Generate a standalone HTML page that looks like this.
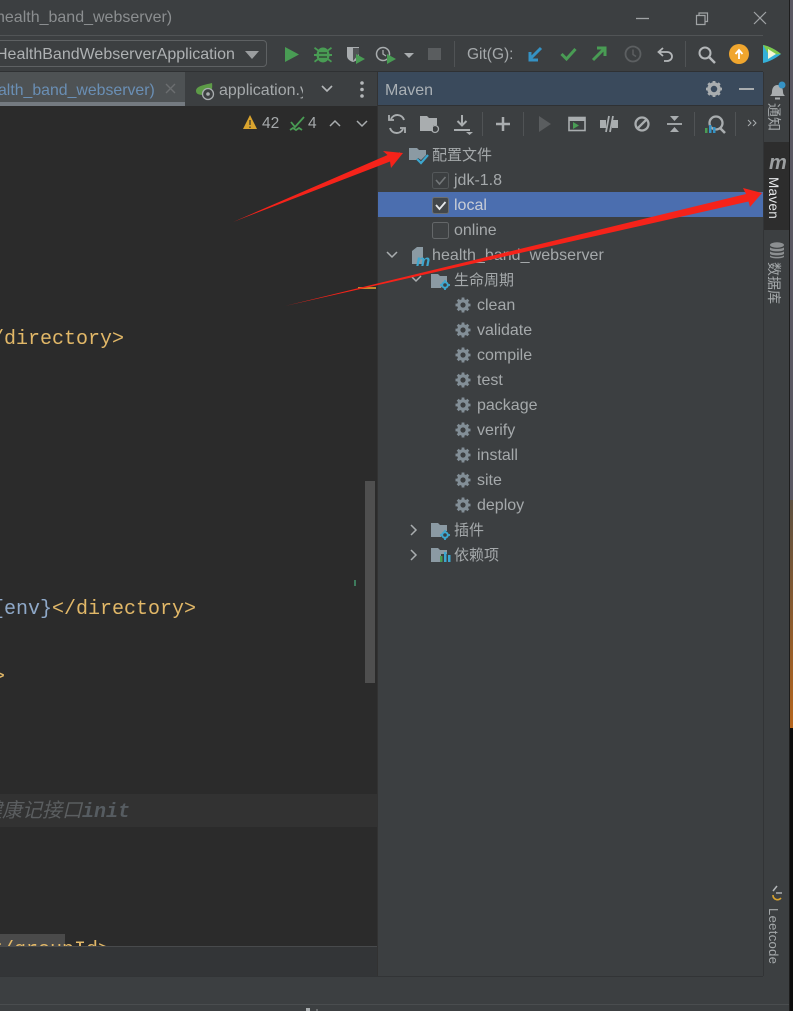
<!DOCTYPE html>
<html><head><meta charset="utf-8">
<style>
html,body{margin:0;padding:0;background:#3c3f41}
#p{position:relative;width:793px;height:1011px;overflow:hidden;background:#3c3f41;font-family:"Liberation Sans","Noto Sans CJK SC",sans-serif;color:#adb0b2}
.b{position:absolute}
.t{position:absolute;white-space:nowrap;font-size:16px;line-height:20px;color:#a5a9ab}
.z{font-size:15px}
.c{position:absolute;white-space:pre;font-family:"Liberation Mono",monospace;font-size:20px;line-height:24px;color:#e2b868}
svg{position:absolute;overflow:visible}
.v{position:absolute;white-space:nowrap;font-size:13px;line-height:16px;transform-origin:0 0;transform:rotate(90deg);color:#a5a9ab}
</style></head><body><div id="p">

<!-- structure -->
<div class="b" style="left:0;top:35px;width:763px;height:1px;background:#515456"></div>
<div class="b" style="left:0;top:71px;width:763px;height:1px;background:#2f3133"></div>
<div class="b" style="left:0;top:72px;width:378px;height:34px;background:#3c3f41"></div>
<div class="b" style="left:0;top:72px;width:185px;height:34px;background:#4e5254"></div>
<div class="b" style="left:0;top:102px;width:185px;height:4px;background:#747a80"></div>
<div class="b" style="left:378px;top:72px;width:385px;height:33px;background:#3a4a5c"></div>
<div class="b" style="left:378px;top:105px;width:385px;height:1px;background:#2f3133"></div>
<div class="b" style="left:0;top:106px;width:377px;height:840px;background:#2b2b2b"></div>
<div class="b" style="left:377px;top:72px;width:1px;height:904px;background:#323232"></div>
<div class="b" style="left:0;top:794px;width:377px;height:33px;background:#323232"></div>
<div class="b" style="left:0;top:946px;width:377px;height:1px;background:#484a4c"></div>
<div class="b" style="left:0;top:947px;width:377px;height:29px;background:#333537"></div>
<div class="b" style="left:0;top:976px;width:763px;height:1px;background:#323436"></div>
<div class="b" style="left:0;top:1004px;width:790px;height:1px;background:#4a4d4f"></div>
<div class="b" style="left:763px;top:72px;width:1px;height:904px;background:#323436"></div>
<div class="b" style="left:764px;top:142px;width:26px;height:88px;background:#2d2d2d"></div>
<div class="b" style="left:365px;top:481px;width:10px;height:202px;background:#4f4f4f"></div>
<div class="b" style="left:354px;top:580px;width:2px;height:6px;background:#3d7a5c"></div>
<div class="b" style="left:358px;top:287px;width:18px;height:2px;background:#c08a2c"></div>

<!-- right edge -->
<div class="b" style="left:789px;top:0;width:1px;height:1011px;background:#1d1d1d"></div>
<div class="b" style="left:790px;top:0;width:3px;height:500px;background:#5a5862"></div>
<div class="b" style="left:790px;top:500px;width:3px;height:228px;background:linear-gradient(#5d5040,#b5651d)"></div>
<div class="b" style="left:790px;top:728px;width:3px;height:283px;background:#0c0c0c"></div>

<!-- title -->
<div class="t" style="left:-4px;top:8px;color:#8b8e90;font-size:16px">health_band_webserver)</div>
<svg style="left:0;top:0" width="793" height="72" fill="none">
<path d="M636 18.5h13" stroke="#a0a3a5" stroke-width="1.3"/>
<path d="M696.500 15.500h8.500v9h-8.500zM699 15.500v-2.500h8.500v8.500h-2.500" stroke="#a0a3a5" stroke-width="1.200"/>
<path d="M754 12l12 12M766 12l-12 12" stroke="#a0a3a5" stroke-width="1.200"/>
</svg>

<!-- run config -->
<div class="b" style="left:-6px;top:40px;width:273px;height:27px;border:1px solid #5e6163;border-radius:4px;box-sizing:border-box"></div>
<div class="t" style="left:-4px;top:45px;font-size:16px;color:#aeb1b3">HealthBandWebserverApplication</div>

<svg style="left:0;top:0" width="793" height="72">
<path d="M245 51h14l-7 8z" fill="#9a9d9f"/>
<path d="M285 47l14 7.500-14 7.500z" fill="#499c54"/>
<!-- bug -->
<g fill="#499c54"><ellipse cx="323" cy="55" rx="6.500" ry="7.500"/><path d="M315 47l4 3-1 1.500-4-3zM331 47l-4 3 1 1.500 4-3zM314 54h5v2h-5zM327 54h5v2h-5zM314 61l4-3 1 1.500-4 3zM332 61l-4-3-1 1.500 4 3z"/></g>
<path d="M319 53h8M319 57h8" stroke="#2f3a30" stroke-width="1.200"/>
<!-- coverage -->
<path d="M347 47h12v9c0 3-3 5-6 6-3-1-6-3-6-6z" fill="#a9adaf"/><path d="M353 48h6v6l-6 7z" fill="#505355"/>
<path d="M356 54l9 5-9 5z" fill="#499c54"/>
<!-- profiler -->
<circle cx="383" cy="54" r="6.500" fill="none" stroke="#a9adaf" stroke-width="1.500"/><path d="M383 50v4l3 2" fill="none" stroke="#a9adaf" stroke-width="1.300"/>
<path d="M387 54l9 5-9 5z" fill="#499c54"/>
<path d="M404 53h10l-5 5z" fill="#a9adaf"/>
<rect x="428" y="48" width="13" height="12" fill="#5a5d5f"/>
<rect x="454" y="41" width="1" height="26" fill="#505355"/>
<!-- git -->
<path d="M541 48l-11 11M530 52v8h8" fill="none" stroke="#3592c4" stroke-width="3"/>
<path d="M561.500 54l5 5 9-10" fill="none" stroke="#499c54" stroke-width="3"/>
<path d="M593 60l11-11M597 48h8v8" fill="none" stroke="#499c54" stroke-width="3"/>
<circle cx="633" cy="54" r="7.500" fill="none" stroke="#5c5f61" stroke-width="1.800"/><path d="M633 49.500v5l3 2" fill="none" stroke="#5c5f61" stroke-width="1.500"/>
<path d="M663 48l-4.500 4 4.500 4M659 52h8c3 0 5 2 5 4.500s-2 4.500-5 4.500h-3" fill="none" stroke="#b4b7b9" stroke-width="1.800"/>
<rect x="685" y="41" width="1" height="26" fill="#505355"/>
<circle cx="705" cy="53" r="5.500" fill="none" stroke="#b4b7b9" stroke-width="2"/><path d="M709 57l6 6" stroke="#b4b7b9" stroke-width="2.500"/>
<circle cx="739" cy="54" r="10" fill="#f0a62e"/><path d="M739 59v-8M735.500 54l3.500-4 3.500 4" fill="none" stroke="#fff" stroke-width="1.800"/>
<path d="M763 45c6 1 13 5 18 9-5 4-12 8-18 9z" fill="#35b0d8"/><path d="M763 45c6 1 13 5 18 9l-12 1z" fill="#7ec84a"/><path d="M768 49l8 5-8 5z" fill="#f5f7d8"/>
</svg>
<div class="t" style="left:467px;top:45px;font-size:15.500px;color:#a5a9ab">Git(G):</div>

<!-- tabs -->
<div class="t" style="left:-2px;top:81px;color:#6a8fb5;font-size:15.850px">alth_band_webserver)</div>
<svg style="left:0;top:0" width="400" height="140" fill="none">
<path d="M166 84l9 9M175 84l-9 9" stroke="#6b6e70" stroke-width="1.400"/>
<path d="M196 91c0-5 8-6 16-8 1 6-1 12-8 12-5 0-8-1-8-4z" fill="#5d9b47"/>
<circle cx="208" cy="94" r="5.500" fill="#3c3f41" stroke="#a9adaf" stroke-width="1.300"/><circle cx="208" cy="94" r="1.800" fill="#a9adaf"/>
<path d="M322 86l5 5 5-5" stroke="#b4b7b9" stroke-width="1.600"/>
<circle cx="362" cy="83" r="1.800" fill="#b4b7b9"/><circle cx="362" cy="89.500" r="1.800" fill="#b4b7b9"/><circle cx="362" cy="96" r="1.800" fill="#b4b7b9"/>
<path d="M250 115l7 14h-14z" fill="#d9a32e"/><path d="M250 120v5M250 126.500v1.500" stroke="#3c3a30" stroke-width="1.300"/>
<path d="M291 122l4 5 9-10M290 130l3-2 3 2 3-2 3 2" stroke="#499c54" stroke-width="1.800"/>
<path d="M330 126l5-5 5 5M357 121l5 5 5-5" stroke="#a9adaf" stroke-width="1.500"/>
</svg>
<div class="t" style="left:219px;top:81px;color:#a5a9ab;font-size:16px;width:84px;overflow:hidden">application.yml</div>
<div class="t" style="left:262px;top:114px;font-size:15.500px;color:#a5a9ab">42</div>
<div class="t" style="left:308px;top:114px;font-size:15.500px;color:#a5a9ab">4</div>

<!-- code -->
<div class="c" style="left:-8px;top:328px">/directory&gt;</div>
<div class="c" style="left:-8px;top:598px"><span style="color:#8fa9c9">{env}</span>&lt;/directory&gt;</div>
<div class="c" style="left:-7px;top:666px">&gt;</div>
<div class="c" style="left:-18px;top:801px;font-style:italic;color:#5b5e60;font-family:'Liberation Mono','Noto Sans CJK SC',monospace">健康记接口<span style="font-weight:bold;color:#565c61">init</span></div>
<div class="b" style="left:0;top:934px;width:65px;height:12px;background:#4a4a4a"></div>
<div class="b" style="left:0;top:934px;width:377px;height:12px;overflow:hidden"><div class="c" style="left:-10px;top:5px">&lt;/groupId&gt;</div></div>

<!-- Maven panel -->
<div class="t" style="left:385px;top:81px;font-size:16px;color:#aab0b5">Maven</div>
<svg style="left:0;top:0" width="793" height="140" fill="none">
<g transform="translate(714 89)"><circle r="5" stroke="#a9adaf" stroke-width="3.500"/><path d="M0-8v3M0 5v3M-8 0h3M5 0h3M-5.700-5.700l2 2M3.700 3.700l2 2M-5.700 5.700l2-2M3.700-3.700l2-2" stroke="#a9adaf" stroke-width="2.800"/></g>
<path d="M739 89h15" stroke="#a9adaf" stroke-width="2"/>
<!-- toolbar -->
<path d="M404 120a7 7 0 0 0-13-1M390 128a7 7 0 0 0 13 1" stroke="#a9adaf" stroke-width="2"/>
<path d="M389 115v5h5M405 133v-5h-5" stroke="#a9adaf" stroke-width="1.800"/>
<path d="M420 116h7l2 2h8v7h-4v6h-13z" fill="#a9adaf"/>
<circle cx="435" cy="129" r="3.500" stroke="#a9adaf" stroke-width="1.300"/>
<path d="M462 115v10M457.500 121l4.500 4.500 4.500-4.500M454 130h16" stroke="#a9adaf" stroke-width="2"/><path d="M466 132h7l-3.500 3z" fill="#a9adaf"/>
<rect x="482" y="112" width="1" height="24" fill="#505355"/>
<path d="M503 117v14M496 124h14" stroke="#a9adaf" stroke-width="2.500"/>
<rect x="523" y="112" width="1" height="24" fill="#505355"/>
<path d="M539 116l12 8-12 8z" fill="#5a5d5f"/>
<rect x="569" y="117.500" width="16" height="13" stroke="#a9adaf" stroke-width="1.600"/>
<path d="M569 118h16v3h-16z" fill="#a9adaf"/>
<path d="M573 122l6 3.500-6 3.500z" fill="#499c54"/>
<path d="M600 120h6v8h-6zM612 120h6v8h-6z" fill="#a9adaf"/><path d="M606 132l3-16M610 132l3-16" stroke="#a9adaf" stroke-width="1.800"/>
<circle cx="642" cy="124" r="6.500" stroke="#a9adaf" stroke-width="2.300"/><path d="M637.500 128.500l9-9" stroke="#a9adaf" stroke-width="2.300"/>
<path d="M667 124h15" stroke="#a9adaf" stroke-width="1.800"/>
<path d="M670 116h9l-4.500 5zM670 132h9l-4.500-5z" fill="#a9adaf"/>
<rect x="694" y="112" width="1" height="24" fill="#505355"/>
<circle cx="716" cy="123" r="6.500" stroke="#a9adaf" stroke-width="2.300"/><path d="M720 128l5 5" stroke="#a9adaf" stroke-width="2.600"/>
<rect x="705" y="128" width="2.500" height="5" fill="#499c54"/><rect x="709" y="125" width="2.500" height="8" fill="#3592c4"/><rect x="713" y="127" width="2.500" height="6" fill="#3592c4"/>
<rect x="735" y="112" width="1" height="24" fill="#505355"/>
<path d="M748 120l3 3-3 3M753 120l3 3-3 3" stroke="#a9adaf" stroke-width="1"/>
</svg>

<!-- selected row -->
<div class="b" style="left:378px;top:192px;width:385px;height:25px;background:#4b6eaf"></div>

<!-- tree -->
<svg style="left:0;top:0" width="793" height="600" fill="none">
<path d="M392 153l4 3.500 4-3.500" stroke="#a9adaf" stroke-width="1.500"/>
<path d="M409 148h8l2 2h7v5l-5 5-3-2-2 2h-7z" fill="#8b9aa3"/>
<path d="M417 159l4 4 7-8" stroke="#3da7cf" stroke-width="2.200"/>
<rect x="432.500" y="172.500" width="16" height="16" rx="2" stroke="#54585a" fill="#3c3f41"/>
<path d="M436 180l3.500 4 6-7" stroke="#74787a" stroke-width="1.600"/>
<rect x="432.500" y="197.500" width="16" height="16" rx="2" stroke="#6b6e70" fill="#43474a"/>
<path d="M436 205l3.500 4 6-7" stroke="#e6e8ea" stroke-width="1.800"/>
<rect x="432.500" y="222.500" width="16" height="16" rx="2" stroke="#646769" fill="#3f4244"/>
<path d="M387 252l5 5 5-5" stroke="#a9adaf" stroke-width="1.500"/>
<path d="M412 251l5-4h6v17h-11z" fill="#8b9aa3"/>
<text x="416" y="266" font-family="Liberation Sans" font-size="16" font-weight="bold" font-style="italic" fill="#3da7cf">m</text>
<path d="M411 276l5 5 5-5" stroke="#a9adaf" stroke-width="1.500"/>
<path d="M431 274h7l2 2h7v6h-3l-3 6h-10z" fill="#8b9aa3"/>
<g transform="translate(445 285)"><circle r="2.800" stroke="#3da7cf" stroke-width="2"/><path d="M0-5v2M0 3v2M-5 0h2M3 0h2" stroke="#3da7cf" stroke-width="1.800"/></g>
<path d="M411 525l5 5-5 5M411 550l5 5-5 5" stroke="#a9adaf" stroke-width="1.500"/>
<path d="M431 523h7l2 2h7v6h-3l-3 6h-10z" fill="#8b9aa3"/>
<g transform="translate(445 535)"><circle r="2.800" stroke="#3da7cf" stroke-width="2"/><path d="M0-5v2M0 3v2M-5 0h2M3 0h2" stroke="#3da7cf" stroke-width="1.800"/></g>
<path d="M431 548h7l2 2h7v4h-6v8h-10z" fill="#8b9aa3"/>
<rect x="440" y="556" width="2.500" height="6" fill="#499c54"/><rect x="444" y="552" width="2.500" height="10" fill="#3da7cf"/><rect x="448" y="555" width="2.500" height="7" fill="#3da7cf"/>
<g id="gears" stroke="#828e96">
<g transform="translate(463 305)"><circle r="4.200" stroke-width="3.200"/><path d="M0-7.500v3M0 4.500v3M-7.500 0h3M4.500 0h3M-5.300-5.300l2 2M3.300 3.300l2 2M-5.300 5.300l2-2M3.300-3.300l2-2" stroke-width="2.800"/></g>
<g transform="translate(463 330)"><circle r="4.200" stroke-width="3.200"/><path d="M0-7.500v3M0 4.500v3M-7.500 0h3M4.500 0h3M-5.300-5.300l2 2M3.300 3.300l2 2M-5.300 5.300l2-2M3.300-3.300l2-2" stroke-width="2.800"/></g>
<g transform="translate(463 355)"><circle r="4.200" stroke-width="3.200"/><path d="M0-7.500v3M0 4.500v3M-7.500 0h3M4.500 0h3M-5.300-5.300l2 2M3.300 3.300l2 2M-5.300 5.300l2-2M3.300-3.300l2-2" stroke-width="2.800"/></g>
<g transform="translate(463 380)"><circle r="4.200" stroke-width="3.200"/><path d="M0-7.500v3M0 4.500v3M-7.500 0h3M4.500 0h3M-5.300-5.300l2 2M3.300 3.300l2 2M-5.300 5.300l2-2M3.300-3.300l2-2" stroke-width="2.800"/></g>
<g transform="translate(463 405)"><circle r="4.200" stroke-width="3.200"/><path d="M0-7.500v3M0 4.500v3M-7.500 0h3M4.500 0h3M-5.300-5.300l2 2M3.300 3.300l2 2M-5.300 5.300l2-2M3.300-3.300l2-2" stroke-width="2.800"/></g>
<g transform="translate(463 430)"><circle r="4.200" stroke-width="3.200"/><path d="M0-7.500v3M0 4.500v3M-7.500 0h3M4.500 0h3M-5.300-5.300l2 2M3.300 3.300l2 2M-5.300 5.300l2-2M3.300-3.300l2-2" stroke-width="2.800"/></g>
<g transform="translate(463 455)"><circle r="4.200" stroke-width="3.200"/><path d="M0-7.500v3M0 4.500v3M-7.500 0h3M4.500 0h3M-5.300-5.300l2 2M3.300 3.300l2 2M-5.300 5.300l2-2M3.300-3.300l2-2" stroke-width="2.800"/></g>
<g transform="translate(463 480)"><circle r="4.200" stroke-width="3.200"/><path d="M0-7.500v3M0 4.500v3M-7.500 0h3M4.500 0h3M-5.300-5.300l2 2M3.300 3.300l2 2M-5.300 5.300l2-2M3.300-3.300l2-2" stroke-width="2.800"/></g>
<g transform="translate(463 505)"><circle r="4.200" stroke-width="3.200"/><path d="M0-7.500v3M0 4.500v3M-7.500 0h3M4.500 0h3M-5.300-5.300l2 2M3.300 3.300l2 2M-5.300 5.300l2-2M3.300-3.300l2-2" stroke-width="2.800"/></g>
</g>
</svg>

<div class="t z" style="left:432px;top:146px">配置文件</div>
<div class="t" style="left:454px;top:171px">jdk-1.8</div>
<div class="t" style="left:454px;top:196px;color:#c8cdd6">local</div>
<div class="t" style="left:454px;top:221px">online</div>
<div class="t" style="left:432px;top:246px;letter-spacing:.05px">health_band_webserver</div>
<div class="t z" style="left:454px;top:271px">生命周期</div>
<div class="t" style="left:477px;top:296px">clean</div>
<div class="t" style="left:477px;top:321px">validate</div>
<div class="t" style="left:477px;top:346px">compile</div>
<div class="t" style="left:477px;top:371px">test</div>
<div class="t" style="left:477px;top:396px">package</div>
<div class="t" style="left:477px;top:421px">verify</div>
<div class="t" style="left:477px;top:446px">install</div>
<div class="t" style="left:477px;top:471px">site</div>
<div class="t" style="left:477px;top:496px">deploy</div>
<div class="t z" style="left:454px;top:521px">插件</div>
<div class="t z" style="left:454px;top:546px">依赖项</div>

<!-- side bar -->
<svg style="left:0;top:0" width="793" height="1011" fill="none">
<path d="M770 96c1-1 2-2 2-4 0-4 2-7 5.500-7s5.500 3 5.500 7c0 2 1 3 2 4z" fill="#a9adaf"/><rect x="775" y="97.500" width="5" height="2" fill="#a9adaf"/>
<circle cx="782" cy="85" r="3.500" fill="#3592c4"/>
<ellipse cx="777" cy="245" rx="7" ry="2.700" fill="#8c8f91"/>
<path d="M770 247c0 2.500 14 2.500 14 0v2.500c0 2.500-14 2.500-14 0zM770 251c0 2.500 14 2.500 14 0v2.500c0 2.500-14 2.500-14 0zM770 255c0 2.500 14 2.500 14 0v1.500c0 2.500-14 2.500-14 0z" fill="#8c8f91"/>
<path d="M773 895a4.500 4.500 0 0 0 8 3" stroke="#d9a32e" stroke-width="1.600"/>
<path d="M777 886l-4 5" stroke="#b4b7b9" stroke-width="1.500"/><path d="M776 893h6" stroke="#b4b7b9" stroke-width="1.400"/>
<text x="769" y="169" font-family="Liberation Sans" font-size="20" font-weight="bold" font-style="italic" fill="#9c9fa1">m</text>
</svg>
<div class="v" style="left:782px;top:103px;font-size:14px">通知</div>
<div class="v" style="left:781px;top:177px;color:#e4e6e8;font-size:13.500px;letter-spacing:.3px">Maven</div>
<div class="v" style="left:782px;top:262px;font-size:14px">数据库</div>
<div class="v" style="left:781px;top:908px;letter-spacing:.35px">Leetcode</div>

<!-- bottom speck -->
<div class="b" style="left:306px;top:1008px;width:4px;height:3px;background:#a9adaf"></div>
<div class="b" style="left:316px;top:1009px;width:2px;height:2px;background:#6a6d6f"></div>

<!-- red arrows -->
<svg style="left:0;top:0" width="793" height="400">
<path d="M233 222L387.500 155 383 151 403 153 391 168 390 161.500z" fill="#f5231a"/>
<path d="M285 306L746 194 743 188 762 193 750 207 748.500 201.500z" fill="#f5231a"/>
</svg>

</div></body></html>
